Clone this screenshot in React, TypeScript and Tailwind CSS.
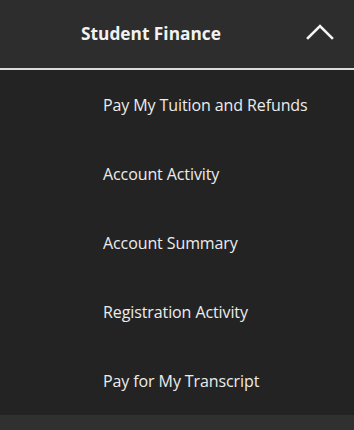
export default function App() {
  const items = [
    "Pay My Tuition and Refunds",
    "Account Activity",
    "Account Summary",
    "Registration Activity",
    "Pay for My Transcript",
  ];
  return (
    <div
      className="w-[354px] h-[430px] flex flex-col bg-[#232323] overflow-hidden"
      style={{ fontFamily: '"Open Sans", "Noto Sans", sans-serif' }}
    >
      <div className="h-[68px] shrink-0 flex items-center bg-[#2d2d2d] relative">
        <span className="ml-[81px] -mt-[1px] text-[17.3px] font-bold text-[#f2f2f2] leading-none">
          Student Finance
        </span>
        <svg
          className="absolute left-[306px] top-[24px]"
          width="28"
          height="16"
          viewBox="0 0 28 16"
          fill="none"
        >
          <path
            d="M2 14 L14 2 L26 14"
            stroke="#f4f4f4"
            strokeWidth="2.6"
            strokeLinecap="square"
          />
        </svg>
      </div>
      <div className="h-[2px] shrink-0 bg-[#dcdcdc]" />
      <div className="flex flex-col">
        {items.map((t) => (
          <div key={t} className="h-[69px] flex items-center pl-[103px]">
            <span className="text-[16px] text-[#ececec] leading-none tracking-[-0.1px]">{t}</span>
          </div>
        ))}
      </div>
      <div className="flex-1 bg-[#303030]" />
    </div>
  );
}
